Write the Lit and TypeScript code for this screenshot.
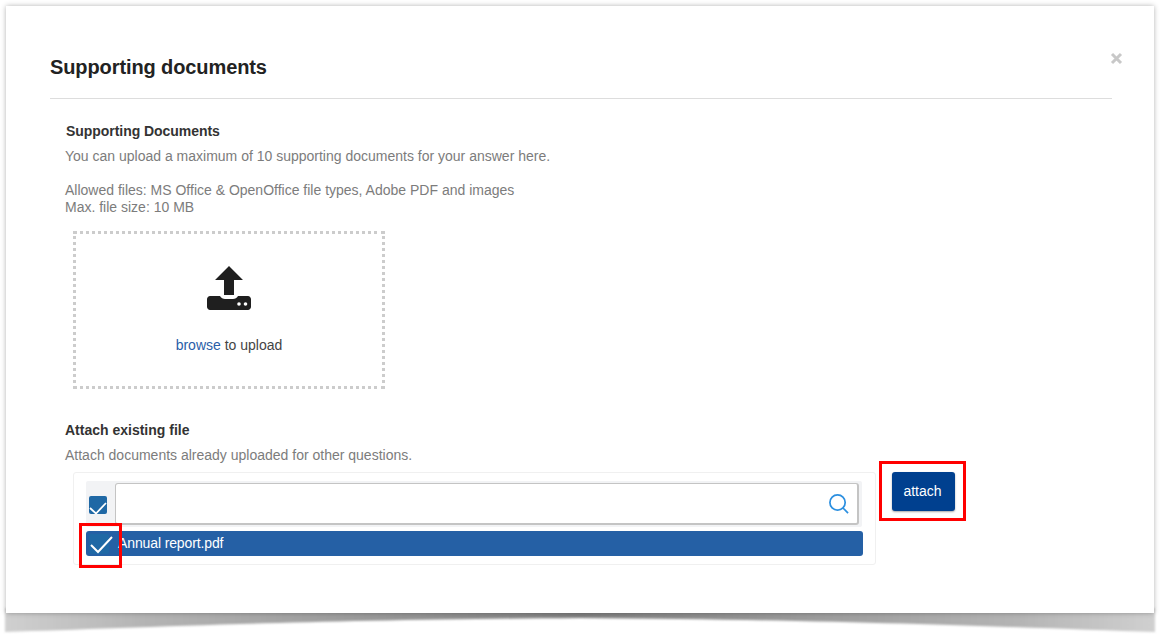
import {LitElement, html, css} from 'lit';
import {customElement} from 'lit/decorators.js';

@customElement('app-root')
export class AppRoot extends LitElement {
  static styles = css`
    :host {
      display: block;
      position: relative;
      width: 1168px;
      height: 642px;
      background: #fff;
      overflow: hidden;
      font-family: 'Liberation Sans', Arial, sans-serif;
      color: #7c7c7c;
      font-size: 14px;
    }

    .shadow {
      position: absolute;
      left: 0;
      top: 600px;
    }

    .page {
      position: relative;
      padding: 6px 14px 0 6px;
    }

    .modal {
      position: relative;
      box-sizing: border-box;
      height: 607px;
      padding: 0 42px 0 44px;
      background: #fff;
      box-shadow: 0 0 5px rgba(0, 0, 0, 0.3);
    }

    .close {
      position: absolute;
      top: 46px;
      right: 31px;
      width: 13px;
      height: 13px;
    }

    .header {
      height: 93px;
      box-sizing: border-box;
      padding-top: 48px;
      border-bottom: 1px solid #ddd;
    }

    h1 {
      margin: 0;
      font-size: 20px;
      line-height: 26px;
      font-weight: bold;
      letter-spacing: -0.1px;
      color: #222;
    }

    .body {
      padding: 24px 0 0 15px;
    }

    h2 {
      margin: 0;
      font-size: 14px;
      line-height: 16px;
      font-weight: bold;
      color: #333;
    }

    .first {
      margin-left: 1px;
      letter-spacing: -0.05px;
    }

    p {
      margin: 0;
      line-height: 16px;
    }

    .intro {
      margin-top: 9px;
    }

    .allowed {
      margin-top: 18px;
      line-height: 17px;
    }

    .drop {
      box-sizing: border-box;
      width: 312px;
      height: 158px;
      margin: 15px 0 0 8px;
      border: 3px dotted #ccc;
      display: flex;
      flex-direction: column;
      align-items: center;
      padding-top: 32px;
    }

    .drop svg {
      display: block;
    }

    .drop-text {
      margin-top: 27px;
      color: #444;
      line-height: 16px;
    }

    .drop-text a {
      color: #2a5ea8;
    }

    .existing {
      margin-top: 33px;
    }

    .hint {
      margin-top: 9px;
    }

    .attach-row {
      display: flex;
      align-items: flex-start;
      gap: 16px;
      margin: 9px 0 0 8px;
    }

    .picker {
      box-sizing: border-box;
      width: 803px;
      height: 93px;
      padding: 8px 12px 0;
      border: 1px solid #f0f0f0;
      border-radius: 3px;
    }

    .search-row {
      display: flex;
      align-items: center;
      height: 46px;
      width: 776px;
      background: #f2f3f5;
      border-radius: 2px;
    }

    .check {
      width: 18px;
      height: 18px;
      margin: 2px 8px 0 3px;
      flex: none;
      background: #1f68a5;
      border-radius: 2px;
      overflow: hidden;
    }

    .check svg {
      display: block;
    }

    .search {
      flex: none;
      box-sizing: border-box;
      width: 744px;
      height: 42px;
      border: 1px solid #c4c4c4;
      border-right-width: 2px;
      border-bottom-width: 2px;
      border-radius: 3px;
      background: #fff;
      display: flex;
      align-items: center;
      justify-content: flex-end;
      padding-right: 8px;
    }

    .item {
      position: relative;
      display: flex;
      align-items: center;
      box-sizing: border-box;
      width: 777px;
      height: 25px;
      margin-top: 4px;
      background: #2560a5;
      border-radius: 3px;
      color: #fff;
      padding-left: 3px;
      line-height: 25px;
    }

    .item .box {
      width: 20px;
      height: 20px;
      background: #1f68a5;
      border-radius: 2px;
      margin-right: 6px;
      flex: none;
    }

    .item .tick {
      position: absolute;
      left: 2px;
      top: 2px;
    }

    .item .name {
      margin-left: 3px;
      letter-spacing: -0.12px;
    }

    .mark {
      position: absolute;
      box-sizing: border-box;
      border: 3px solid #f00;
    }

    .mark-item {
      left: -7px;
      top: -8px;
      width: 43px;
      height: 45px;
    }

    .attach-wrap {
      position: relative;
    }

    .mark-attach {
      left: -13px;
      top: -11px;
      width: 87px;
      height: 60px;
    }

    button {
      display: block;
      width: 63px;
      height: 39px;
      padding: 0 2px 2px 0;
      border: none;
      border-radius: 3px;
      background: #00408f;
      color: #fff;
      font: 14px 'Liberation Sans', Arial, sans-serif;
      box-shadow: 0 1px 2px rgba(0, 0, 0, 0.35);
    }
  `;

  render() {
    return html`
      <svg class="shadow" width="1168" height="42" viewBox="0 0 1168 42">
        <defs>
          <linearGradient id="shade" x1="0" x2="1" y1="0" y2="0">
            <stop offset="0" stop-color="#d0d0d0" />
            <stop offset="0.12" stop-color="#b4b4b4" />
            <stop offset="0.3" stop-color="#9c9c9c" />
            <stop offset="0.5" stop-color="#808080" />
            <stop offset="0.7" stop-color="#9c9c9c" />
            <stop offset="0.88" stop-color="#b4b4b4" />
            <stop offset="1" stop-color="#d0d0d0" />
          </linearGradient>
          <filter id="soft" x="-2%" y="-30%" width="104%" height="160%">
            <feGaussianBlur stdDeviation="1.2" />
          </filter>
        </defs>
        <path
          d="M5 8 H1155 V32 C1030 28 860 20 580 18 C300 20 130 28 5 32 Z"
          fill="url(#shade)"
          filter="url(#soft)"
        />
      </svg>
      <div class="page">
        <div class="modal">
          <svg class="close" viewBox="0 0 13 13">
            <path d="M2 2 L11 11 M11 2 L2 11" stroke="#c8c8c8" stroke-width="3" />
          </svg>
          <div class="header"><h1>Supporting documents</h1></div>
          <div class="body">
            <h2 class="first">Supporting Documents</h2>
            <p class="intro">You can upload a maximum of 10 supporting documents for your answer here.</p>
            <p class="allowed">
              Allowed files: MS Office &amp; OpenOffice file types, Adobe PDF and images<br />Max. file size: 10 MB
            </p>
            <div class="drop">
              <svg width="44" height="44" viewBox="0 0 44 44" fill="#1f1f1f">
                <path d="M22 0 L36 14 H27 V29 H17 V14 H8 Z" />
                <path
                  d="M3 30 H13 C14 32 16 33 18 33 H26 C28 33 30 32 31 30 H41 C42.500 30 44 31.500 44 33 V41 C44 42.500 42.500 44 41 44 H3 C1.500 44 0 42.500 0 41 V33 C0 31.500 1.500 30 3 30 Z"
                />
                <circle cx="32" cy="38" r="1.800" fill="#fff" />
                <circle cx="38.500" cy="38" r="1.800" fill="#fff" />
              </svg>
              <div class="drop-text"><a>browse</a> to upload</div>
            </div>
            <h2 class="existing">Attach existing file</h2>
            <p class="hint">Attach documents already uploaded for other questions.</p>
            <div class="attach-row">
              <div class="picker">
                <div class="search-row">
                  <div class="check">
                    <svg width="18" height="18" viewBox="0 0 18 18">
                      <path d="M1 12 L7 17.500 L17 7" fill="none" stroke="#fff" stroke-width="1.800" />
                    </svg>
                  </div>
                  <div class="search">
                    <svg width="21" height="21" viewBox="0 0 22 22" fill="none" stroke="#2b8fe0" stroke-width="1.800">
                      <circle cx="10" cy="10" r="8" />
                      <path d="M15.700 15.700 L21 21" />
                    </svg>
                  </div>
                </div>
                <div class="item">
                  <div class="box"></div>
                  <svg class="tick" width="26" height="21" viewBox="0 0 26 21" fill="none" stroke="#fff" stroke-width="2">
                    <path d="M3 12 L10 19 L24 4" />
                  </svg>
                  <span class="name">Annual report.pdf</span>
                  <div class="mark mark-item"></div>
                </div>
              </div>
              <div class="attach-wrap">
                <button>attach</button>
                <div class="mark mark-attach"></div>
              </div>
            </div>
          </div>
        </div>
      </div>
    `;
  }
}
